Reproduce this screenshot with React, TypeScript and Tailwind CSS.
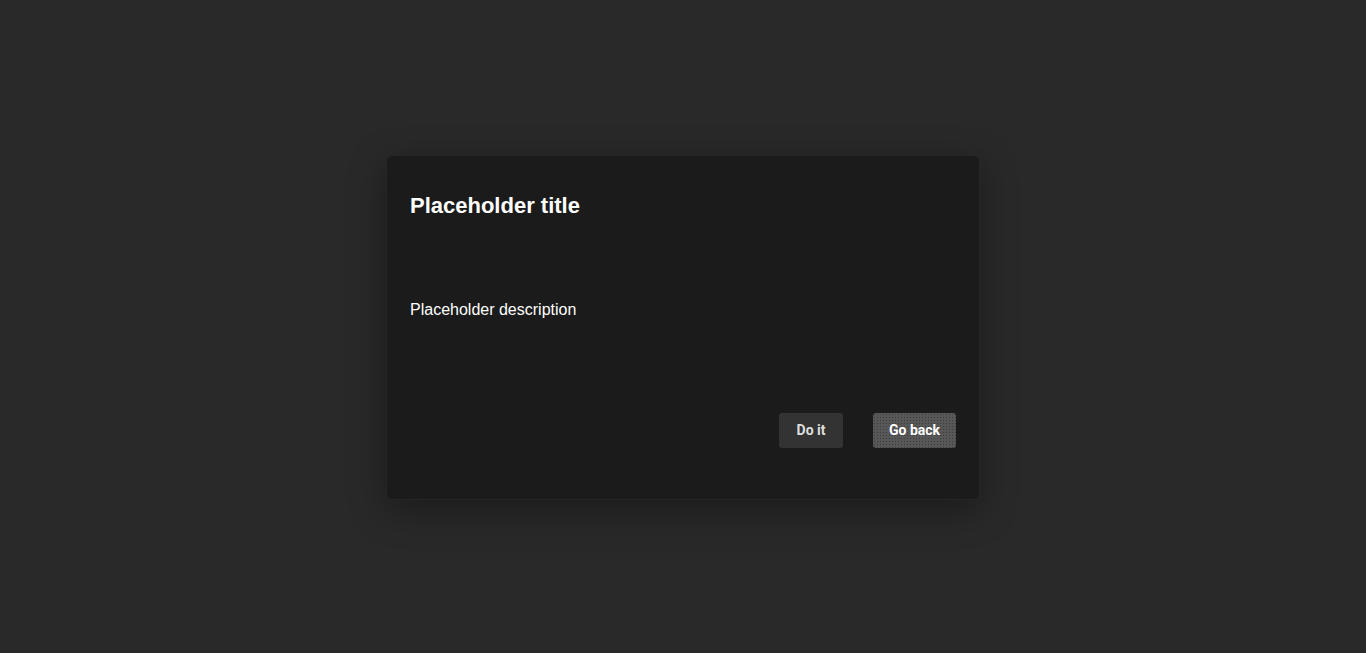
import React from "react";

export default function App() {
  return (
    <div className="min-h-screen w-full bg-[#292929] flex items-center justify-center pt-[2px]">
      <div className="w-[594px] rounded-md border border-[#262626] bg-[#1b1b1b] shadow-[0_10px_36px_rgba(0,0,0,0.35)] flex flex-col px-[23px] pt-[37px] pb-[51px]">
        <h1 className="text-[22px] leading-[26px] font-bold text-white [font-family:'Liberation_Sans',Arial,sans-serif]">
          Placeholder title
        </h1>
        <p className="mt-[79px] text-[16px] leading-[24px] text-white [font-family:'Liberation_Sans',Arial,sans-serif]">
          Placeholder description
        </p>
        <div className="mt-[91px] flex justify-end gap-[30px] [font-family:Roboto,sans-serif]">
          <button className="h-[35px] w-[64px] rounded-[3px] bg-[#333333] text-[14px] font-bold text-[#dedede]">
            Do it
          </button>
          <button className="h-[35px] w-[83px] rounded-[3px] bg-[#575757] bg-[radial-gradient(#3d3d3d_0.6px,transparent_0.7px)] bg-[length:3px_3px] text-[14px] font-bold text-white">
            Go back
          </button>
        </div>
      </div>
    </div>
  );
}
